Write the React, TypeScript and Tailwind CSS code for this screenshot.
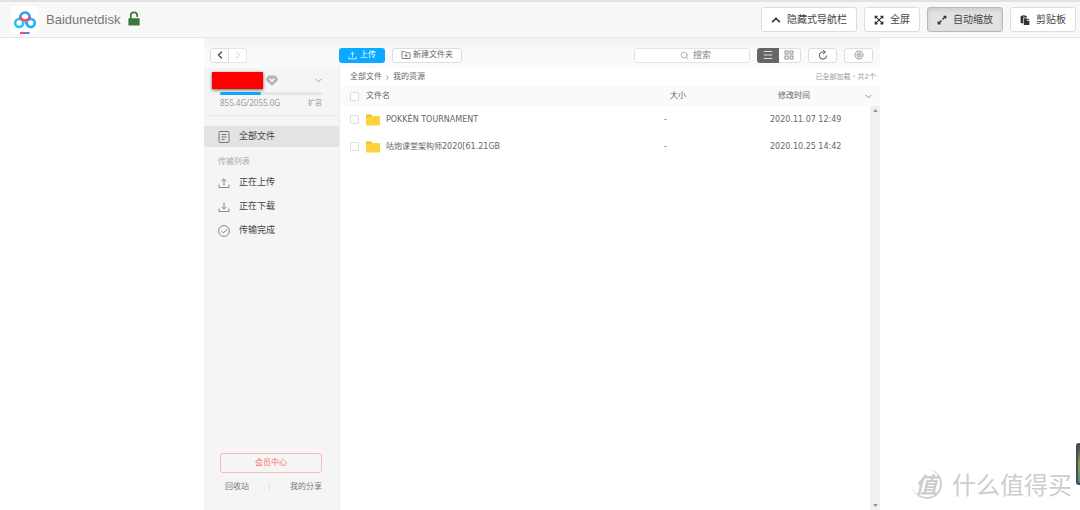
import type { ReactNode } from "react"
import {
  FaChevronUp,
  FaExpandAlt,
  FaExpandArrowsAlt,
  FaPaste,
} from "react-icons/fa"
import {
  ChevronDown,
  ChevronLeft,
  ChevronRight,
  Menu,
  Search,
} from "lucide-react"

const remoteActions = [
  { icon: FaChevronUp, label: "隐藏式导航栏", active: false },
  { icon: FaExpandArrowsAlt, label: "全屏", active: false },
  { icon: FaExpandAlt, label: "自动缩放", active: true },
  { icon: FaPaste, label: "剪贴板", active: false },
]

const files = [
  { name: "POKKÉN TOURNAMENT", size: "-", modified: "2020.11.07 12:49" },
  { name: "咕炮课堂架构师2020[61.21GB", size: "-", modified: "2020.10.25 14:42" },
]

function DiskLogo() {
  return (
    <svg viewBox="0 0 28 28" className="w-7 h-7" fill="none" aria-hidden="true">
      <rect width="28" height="28" rx="5" fill="#fff" />
      <circle cx="8.2" cy="17" r="4" stroke="#2bbcfa" strokeWidth="2.6" />
      <circle cx="19.8" cy="17" r="4" stroke="#1fb0fb" strokeWidth="2.6" />
      <circle cx="14" cy="11.4" r="4.6" fill="#fff" />
      <path d="M9.4 12.2a4.7 4.7 0 1 1 9.2 0" stroke="#2f9df5" strokeWidth="2.6" />
      <path d="M9.4 10.8a4.7 4.7 0 0 0 9.2 0" stroke="#f5486c" strokeWidth="2.6" />
      <path d="M14.4 15.6 17 19.6" stroke="#1fb0fb" strokeWidth="2.4" />
      <path d="M9 27H14" stroke="#f5486c" strokeWidth="2" />
      <path d="M14 27h4.6" stroke="#3b8cf5" strokeWidth="2" />
    </svg>
  )
}

function UnlockIcon({ className }: { className?: string }) {
  return (
    <svg viewBox="0 0 12 15" className={className} fill="none" aria-hidden="true">
      <path d="M2.8 8V4.6a3.2 3.2 0 0 1 6.4 0v.6" stroke="currentColor" strokeWidth="1.7" strokeLinecap="round" />
      <rect x="0.4" y="7.2" width="11.2" height="7.4" rx="0.7" fill="currentColor" />
    </svg>
  )
}

function UploadIcon({ className }: { className?: string }) {
  return (
    <svg viewBox="0 0 12 12" className={className} fill="none" stroke="currentColor" aria-hidden="true">
      <path d="M1 7.5v3h10v-3M6 8.5V2M3.6 4.2 6 1.8l2.4 2.4" />
    </svg>
  )
}

function DownloadIcon({ className }: { className?: string }) {
  return (
    <svg viewBox="0 0 12 12" className={className} fill="none" stroke="currentColor" aria-hidden="true">
      <path d="M1 7.5v3h10v-3M6 1.5V8M3.6 5.8 6 8.2l2.4-2.4" />
    </svg>
  )
}

function DocIcon({ className }: { className?: string }) {
  return (
    <svg viewBox="0 0 12 12" className={className} fill="none" stroke="currentColor" aria-hidden="true">
      <rect x="1" y="0.5" width="10" height="11" rx="0.8" />
      <path d="M3.5 3.5h5M3.5 6h5M3.5 8.5h3" />
    </svg>
  )
}

function DoneIcon({ className }: { className?: string }) {
  return (
    <svg viewBox="0 0 12 12" className={className} fill="none" stroke="currentColor" aria-hidden="true">
      <circle cx="6" cy="6" r="5.4" />
      <path d="M3.3 6 5.4 8l4-4.2" />
    </svg>
  )
}

function NewFolderIcon() {
  return (
    <svg viewBox="0 0 10 10" className="w-2.5 h-2.5" fill="none" stroke="#777" strokeWidth="0.9" aria-hidden="true">
      <path d="M1 1.5h2.8l1 1.3H9v5.7H1z" />
      <path d="M5 4.2v3M3.5 5.7h3" />
    </svg>
  )
}

function GridIcon() {
  return (
    <svg viewBox="0 0 10 10" className="w-2.5 h-2.5" fill="none" stroke="#888" strokeWidth="0.9" aria-hidden="true">
      <rect x="1" y="1" width="3" height="3" />
      <rect x="6" y="1" width="3" height="3" />
      <rect x="1" y="6" width="3" height="3" />
      <rect x="6" y="6" width="3" height="3" />
    </svg>
  )
}

function RefreshIcon() {
  return (
    <svg viewBox="0 0 10 10" className="w-2.5 h-2.5" fill="none" stroke="#666" strokeWidth="1.1" aria-hidden="true">
      <path d="M5.6 2A3.6 3.6 0 1 0 8.6 5.6" />
      <path d="M5 .2 7.2 2.1 5 4" />
    </svg>
  )
}

function GearIcon() {
  return (
    <svg viewBox="0 0 12 12" className="w-2.5 h-2.5" fill="none" stroke="#888" aria-hidden="true">
      <path d="M3.6 1.4h4.8L11.2 6l-2.8 4.6H3.6L.8 6z" strokeLinejoin="round" />
      <circle cx="6" cy="6" r="2.4" />
      <circle cx="6" cy="6" r="0.5" />
    </svg>
  )
}

function FolderIcon() {
  return (
    <svg viewBox="0 0 14 12" className="w-3.5 h-3 shrink-0" aria-hidden="true">
      <path d="M0 1.4A.9.9 0 0 1 .9.5h4l1.4 1.6h6.8a.9.9 0 0 1 .9.9v7.6a.9.9 0 0 1-.9.9H.9a.9.9 0 0 1-.9-.9z" fill="#ffd23c" />
      <path d="M0 1.4A.9.9 0 0 1 .9.5h4l1.4 1.6L5.4 3H0z" fill="#f9c52c" />
    </svg>
  )
}

const transfers = [
  { icon: UploadIcon, label: "正在上传" },
  { icon: DownloadIcon, label: "正在下载" },
  { icon: DoneIcon, label: "传输完成" },
]

function ToolButton({ label, children }: { label: string; children: ReactNode }) {
  return (
    <button
      type="button"
      aria-label={label}
      className="flex h-[15px] w-[29px] items-center justify-center rounded-[3px] border border-[#dedede] bg-white"
    >
      {children}
    </button>
  )
}

function RemoteBar() {
  return (
    <header className="flex h-[38px] items-center justify-between border-t-2 border-b border-t-[#e2e2e2] border-b-[#e7e7e7] bg-[#f8f8f8] pl-[11px] pr-1 font-['Liberation_Sans','Noto_Sans_CJK_SC',sans-serif]">
      <div className="flex items-center">
        <DiskLogo />
        <h1 className="ml-[7px] text-[13px] leading-4 text-[#777]">Baidunetdisk</h1>
        <UnlockIcon className="mb-0.5 ml-2 h-[15px] w-3 text-[#3c763d]" />
      </div>
      <div className="flex gap-[7px]">
        {remoteActions.map((action) => (
          <button
            key={action.label}
            type="button"
            aria-pressed={action.active}
            className={
              action.active
                ? "flex h-[25px] items-center gap-1.5 rounded-[3px] border border-[#b8b8b8] bg-[#e2e2e2] px-[9px] text-[10px] text-[#444] shadow-[inset_0_2px_4px_rgba(0,0,0,0.1)]"
                : "flex h-[25px] items-center gap-1.5 rounded-[3px] border border-[#dcdcdc] bg-white px-[9px] text-[10px] text-[#444]"
            }
          >
            <action.icon className="h-2.5 w-2.5 text-[#333]" />
            {action.label}
          </button>
        ))}
      </div>
    </header>
  )
}

function Toolbar() {
  return (
    <div className="flex h-[30px] items-center border-t-[9px] border-[#f5f5f5] bg-[#fafafa] pb-[5px]">
      <div className="flex w-[135px] shrink-0 pl-1.5">
        <button type="button" aria-label="后退" className="flex h-[15px] w-[19px] items-center justify-center rounded-l-[3px] border border-[#dedede] bg-white">
          <ChevronLeft className="h-3 w-3 text-[#444]" strokeWidth={2.5} />
        </button>
        <button type="button" aria-label="前进" className="flex h-[15px] w-[18px] items-center justify-center rounded-r-[3px] border border-l-0 border-[#e6e6e6] bg-white">
          <ChevronRight className="h-3 w-3 text-[#ccc]" />
        </button>
      </div>
      <div className="flex flex-1 items-center gap-[7px] pr-[7px]">
        <button type="button" className="flex h-[15px] w-[46px] items-center justify-center gap-[3px] rounded-[3px] bg-[#09aaff] text-[8px] text-white">
          <UploadIcon className="h-[9px] w-[9px]" />
          上传
        </button>
        <button type="button" className="flex h-[15px] w-[70px] items-center justify-center gap-0.5 rounded-[3px] border border-[#dedede] bg-white text-[8px] text-[#666]">
          <NewFolderIcon />
          新建文件夹
        </button>
        <label className="ml-auto flex h-[15px] w-[116px] items-center gap-1 rounded-[3px] border border-[#e3e3e3] bg-white pl-[45px]">
          <Search className="h-[9px] w-[9px] shrink-0 text-[#999]" />
          <input
            type="text"
            aria-label="搜索"
            placeholder="搜索"
            className="w-full min-w-0 bg-transparent text-[9px] leading-3 outline-none placeholder:text-[#888]"
          />
        </label>
        <div className="flex h-[15px] w-11">
          <button type="button" aria-label="列表" className="flex flex-1 items-center justify-center rounded-l-[3px] bg-[#666]">
            <Menu className="h-3 w-3 text-[#ddd]" />
          </button>
          <button type="button" aria-label="缩略图" className="flex flex-1 items-center justify-center rounded-r-[3px] border border-l-0 border-[#dedede] bg-white">
            <GridIcon />
          </button>
        </div>
        <ToolButton label="刷新">
          <RefreshIcon />
        </ToolButton>
        <ToolButton label="设置">
          <GearIcon />
        </ToolButton>
      </div>
    </div>
  )
}

function Sidebar() {
  return (
    <aside className="flex w-[135px] shrink-0 flex-col bg-[#f5f5f5]">
      <div className="h-12 border-b border-[#ebebeb] pt-1">
        <div className="flex items-center pl-2 pr-[15px]">
          <div className="h-[17px] w-[51px] bg-[#ff0000] shadow-[0_1px_3px_rgba(0,0,0,0.6)]" />
          <svg viewBox="0 0 12 11" className="ml-[3px] h-[11px] w-3" aria-hidden="true">
            <path d="M2.8.5h6.4L12 3.8 11.3 6 6 10.8.7 6 0 3.8z" fill="#b5b5b5" />
            <path d="M3.6 3.6 6 6.2l2.4-2.6" fill="none" stroke="#fff" strokeWidth="1.5" />
          </svg>
          <ChevronDown className="ml-auto h-[11px] w-[11px] text-[#999]" strokeWidth={2} />
        </div>
        <div className="mt-[3px] ml-4 mr-[17px] h-[3px] rounded-full bg-[#e6e6e6]">
          <div className="h-full w-2/5 rounded-full bg-[#09aaff]" />
        </div>
        <div className="mt-0.5 ml-4 mr-[17px] flex justify-between text-[8px] leading-3 text-[#999]">
          <span className="font-['Noto_Sans',sans-serif]">855.4G/2055.0G</span>
          <a href="#expand" className="text-[7px]">扩容</a>
        </div>
      </div>

      <nav className="pt-2.5 text-[9px] text-[#444]">
        <a href="#all" className="flex h-[21px] items-center gap-[9px] bg-[#e3e3e3] pl-3.5">
          <DocIcon className="h-3 w-3 text-[#777]" />
          全部文件
        </a>
        <h2 className="mt-1.5 pl-3.5 text-[8px] leading-[18px] text-[#aaa]">传输列表</h2>
        {transfers.map((item) => (
          <a key={item.label} href="#transfer" className="flex h-6 items-center gap-[9px] pl-3.5">
            <item.icon className="h-3 w-3 text-[#888]" />
            {item.label}
          </a>
        ))}
      </nav>

      <div className="mt-auto ml-4 mr-[17px] pb-[17px] text-[8px]">
        <button type="button" className="h-5 w-full rounded-[3px] border border-[#f8b9b5] text-[#f4746c]">
          会员中心
        </button>
        <div className="mt-2 flex items-center justify-between pl-[5px] leading-3 text-[#777]">
          <a href="#trash">回收站</a>
          <span className="h-2 w-px bg-[#e3e3e3]" />
          <a href="#share">我的分享</a>
        </div>
      </div>
    </aside>
  )
}

function CheckBox({ label }: { label: string }) {
  return (
    <input
      type="checkbox"
      aria-label={label}
      className="block h-[9px] w-[9px] appearance-none rounded-[1px] border border-[#dcdcdc] bg-white"
    />
  )
}

function FileList() {
  return (
    <main className="flex min-w-0 flex-1 flex-col border-l border-[#ececec] bg-white">
      <div className="flex h-[18px] items-center justify-between pl-2.5 pr-1 text-[8px] text-[#666]">
        <nav className="flex items-center gap-0.5">
          <a href="#all">全部文件</a>
          <ChevronRight className="h-[7px] w-[7px] text-[#888]" strokeWidth={3} />
          <a href="#mine">我的资源</a>
        </nav>
        <span className="font-['DejaVu_Sans','Noto_Sans_CJK_TC',sans-serif] text-[7px] text-[#999]">
          已全部加载，共2个
        </span>
      </div>

      <div className="relative flex-1">
        <table className="w-full table-fixed border-collapse text-left text-[8px] text-[#666]">
          <colgroup>
            <col className="w-[26px]" />
            <col />
            <col className="w-[106px]" />
            <col className="w-[110px]" />
          </colgroup>
          <thead>
            <tr className="h-5 bg-[#fafafa]">
              <th className="p-0 pl-2.5">
                <CheckBox label="全选" />
              </th>
              <th className="p-0 font-normal">文件名</th>
              <th className="p-0 pl-1.5 font-normal">大小</th>
              <th className="p-0 pl-2 pr-1.5 font-normal">
                <div className="flex items-center justify-between">
                  修改时间
                  <ChevronDown className="h-[11px] w-[11px] text-[#888]" />
                </div>
              </th>
            </tr>
          </thead>
          <tbody>
            {files.map((file) => (
              <tr key={file.name} className="h-[27px]">
                <td className="p-0 pl-2.5">
                  <CheckBox label={file.name} />
                </td>
                <td className="p-0">
                  <div className="flex items-center gap-1.5">
                    <FolderIcon />
                    {file.name}
                  </div>
                </td>
                <td className="p-0">{file.size}</td>
                <td className="p-0">{file.modified}</td>
              </tr>
            ))}
          </tbody>
        </table>

        {/* Scrollbar */}
        <div className="absolute top-5 right-0 bottom-0 flex w-2.5 flex-col items-center justify-between bg-[#f0f0f0] py-[3px]">
          <svg viewBox="0 0 5 3" className="h-[3px] w-[5px]" aria-hidden="true">
            <path d="M0 3 2.5 0 5 3z" fill="#999" />
          </svg>
          <svg viewBox="0 0 5 3" className="h-[3px] w-[5px]" aria-hidden="true">
            <path d="M0 0 2.5 3 5 0z" fill="#999" />
          </svg>
        </div>
      </div>
    </main>
  )
}

export default function App() {
  return (
    <div className="relative flex min-h-screen flex-col overflow-hidden bg-white">
      <RemoteBar />
      <div className="flex flex-1 flex-col pl-[204px] pr-[200px] font-['DejaVu_Sans','Noto_Sans_CJK_SC',sans-serif]">
        <Toolbar />
        <div className="flex flex-1">
          <Sidebar />
          <FileList />
        </div>
      </div>

      {/* Side panel handle */}
      <div className="absolute right-0 bottom-[25px] h-[42px] w-1 rounded-l-[3px] border-2 border-r-0 border-[#4a4a55] bg-gradient-to-b from-[#4a4a55] via-[#8a9a50] to-[#3f8f88]" />

      {/* Watermark */}
      <div className="absolute right-2 bottom-2 flex items-center gap-2.5 font-['Noto_Sans_CJK_SC',sans-serif] text-[#cdcdcd]">
        <span className="flex h-[30px] w-[30px] items-center justify-center rounded-full border-r-2 border-b-2 border-[#cfcfcf] text-[22px] font-bold italic leading-none">
          值
        </span>
        <span className="text-2xl leading-9">什么值得买</span>
      </div>
    </div>
  )
}
